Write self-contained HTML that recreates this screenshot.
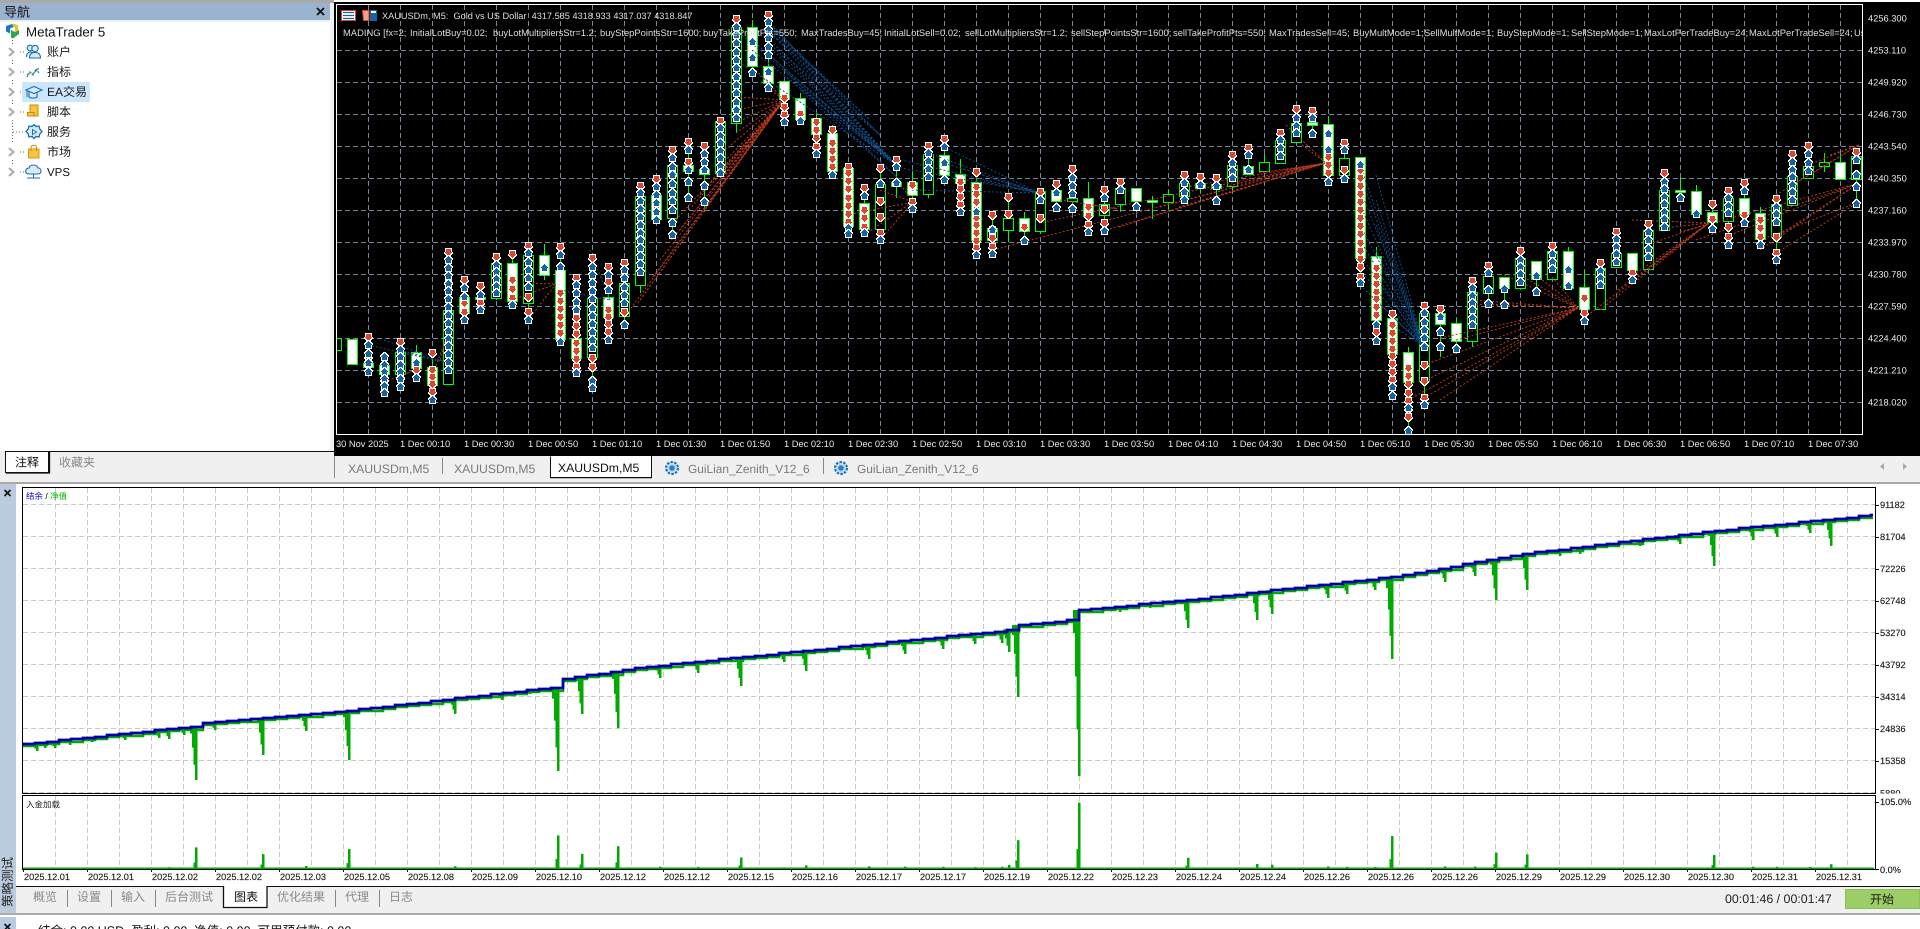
<!DOCTYPE html>
<html><head><meta charset="utf-8"><title>MetaTrader 5</title>
<style>
html,body{margin:0;padding:0;background:#fff;overflow:hidden;width:1920px;height:929px}
svg{position:absolute;left:0;top:0;display:block}
text{font-family:"Liberation Sans","Noto Sans CJK SC",sans-serif;white-space:pre;text-rendering:geometricPrecision}
.w{fill:#dcdcdc;font-size:9.2px}
.w2{fill:#dcdcdc;font-size:9.4px}
.ax{fill:#e8e8e8;font-size:9.3px}
.tr{fill:#1a1a1a;font-size:12px}
.tb{fill:#7a7a7a;font-size:12.2px}
.tb2{fill:#7a7a7a;font-size:11.9px}
.bt{fill:#8a8a8a;font-size:12px}
.da{fill:#1c1c1c;font-size:9.2px;stroke:#1c1c1c;stroke-width:.15px}
.ya{fill:#1c1c1c;font-size:9.2px;stroke:#1c1c1c;stroke-width:.15px}
</style></head><body>
<svg width="1920" height="929" viewBox="0 0 1920 929" xmlns="http://www.w3.org/2000/svg">
<defs>
<clipPath id="cc"><rect x="337" y="5" width="1525" height="429"/></clipPath>
<clipPath id="c5"><rect x="1860" y="780" width="60" height="13.5"/></clipPath>
<clipPath id="cb"><rect x="0" y="917" width="1920" height="12"/></clipPath>
</defs>
<rect width="1920" height="929" fill="#fff"/>
<!-- navigator -->
<rect x="0" y="0" width="334" height="3" fill="#a9a9a9"/>
<rect x="0" y="3" width="330" height="17" fill="#9ab3cf"/>
<rect x="330" y="3" width="4" height="480" fill="#f0f0f0"/>
<rect x="0" y="20" width="330" height="2" fill="#eef0f3"/>
<text x="4" y="16.500" font-size="13" fill="#111">导航</text>
<path d="M317 8l7 7M324 8l-7 7" stroke="#111" stroke-width="1.800" fill="none"/>
<!-- tree lines -->
<path d="M12.500 40V46M12.500 60V66M12.500 80V86M12.500 100V106M12.500 120V142M12.500 160V166" stroke="#666" stroke-dasharray="1 2" fill="none"/>
<path d="M20 52H24M20 72H24M20 92H24M20 112H24M13 132H24M20 152H24M20 172H24" stroke="#666" stroke-dasharray="1 2" fill="none"/>
<path d="M9 48l4.500 4-4.500 4M9 68l4.500 4-4.500 4M9 88l4.500 4-4.500 4M9 108l4.500 4-4.500 4M9 148l4.500 4-4.500 4M9 168l4.500 4-4.500 4" stroke="#aaa" stroke-width="2" fill="none"/>
<rect x="22" y="82" width="68" height="20" fill="#cce6fd"/>
<!-- MT logo -->
<g transform="translate(5 23)">
<path d="M1 3l6-2 4 2-6 2.500v5l-4-2z" fill="#1d77c9"/>
<path d="M8 0.500l5 1.800v5l-3 1.500v-4.500l-3-1.500z" fill="#f4c21a"/>
<path d="M6 7l4 2 4-2v4l-6 4.500-2-1z" fill="#2aa84a"/>
</g>
<!-- accounts -->
<g fill="#d8ebfa" stroke="#1b6eb3" stroke-width="1.100">
<circle cx="30" cy="48" r="2.800"/><path d="M26.500 57c0-4 2-5 4-5s3 .7 3 1.500"/>
<circle cx="35" cy="48.500" r="3.200"/><path d="M29.500 58c0-4 2.500-5.500 5.500-5.500s5.500 1.500 5.500 5.500z"/>
</g>
<!-- indicators -->
<path d="M27 77l3-5 3 3 3-6 3 4" stroke="#1b6eb3" stroke-width="1.200" fill="none" stroke-dasharray="2 .8"/>
<path d="M27 75l3-3 3 2 3-3 3-3" stroke="#2aa84a" stroke-width="1.200" fill="none" stroke-dasharray="2 1.500"/>
<!-- cap -->
<g fill="#d8ebfa" stroke="#1b6eb3" stroke-width="1.100"><path d="M29 92v5c2 1.500 6 1.500 8 0v-5"/><path d="M26 90l8-3.500 8 3.500-8 3.500z"/></g><path d="M27 91v6" stroke="#1b6eb3"/>
<!-- script -->
<path d="M30 105h8v11h-10.500v-3.500h2.500z" fill="#f6c343" stroke="#c98a04"/>
<path d="M27.500 116h6.500v-3.500h-6.500z" fill="#f6c343" stroke="#c98a04"/>
<!-- service gear -->
<path d="M34 124.500l2 2 3-.5 .8 3 2.200 2.500-2.200 2.500-.8 3-3-.5-2 2-2-2-3 .5-.8-3-2.200-2.500 2.200-2.500.8-3 3 .5z" fill="#d8ebfa" stroke="#1b6eb3" stroke-width="1.300"/>
<path d="M32.500 129.500l4 2.500-4 2.500z" fill="#fff" stroke="#1b6eb3"/>
<!-- market bag -->
<path d="M28.500 149h10.500v9h-10.500z" fill="#f6c343" stroke="#d59a0c"/><path d="M31 151v-3.500c0-3 5.500-3 5.500 0v3.500" stroke="#c98a04" fill="none"/>
<!-- cloud -->
<path d="M29 174c-5 0-4-6 0-6 1-4 8-4 9 0 4 0 4 6 0 6z" fill="#d8ebfa" stroke="#1b6eb3" stroke-width="1.100"/><path d="M33.500 174v4M27 178h13" stroke="#1b6eb3"/>
<text x="26" y="36.500" font-size="13.300" fill="#111">MetaTrader 5</text>
<text x="47" y="56" class="tr">账户</text><text x="47" y="76" class="tr">指标</text>
<text x="47" y="96" class="tr">EA交易</text><text x="47" y="116" class="tr">脚本</text>
<text x="47" y="136" class="tr">服务</text><text x="47" y="156" class="tr">市场</text>
<text x="47" y="176" font-size="11.500" fill="#111">VPS</text>
<!-- left tabs -->
<rect x="0" y="451" width="334" height="31" fill="#f0f0f0"/>
<path d="M49 451.500H334" stroke="#111"/>
<rect x="5.500" y="451.500" width="43" height="21" fill="#fff" stroke="#111"/>
<path d="M6 473h43.500V452" stroke="#111" stroke-width="1.300" fill="none"/>
<text x="15" y="466.500" font-size="12" fill="#111">注释</text>
<text x="59" y="466.500" font-size="12" fill="#888">收藏夹</text>
<!-- chart area -->
<rect x="334" y="2" width="1586" height="454" fill="#000"/>
<path d="M336.500 4.500H1862.500V434.500H336.500Z" fill="none" stroke="#fff"/>
<g id="grid" stroke="#76869f" stroke-dasharray="5 3" fill="none"></g>
<g id="chart" clip-path="url(#cc)"></g>
<g clip-path="url(#cc)">
<rect x="341.500" y="10.500" width="14" height="10" fill="#fff" stroke="#d8432b" stroke-width="1"/><path d="M343 12.500h11M343 15.500h11M343 18.500h11" stroke="#1464a5" stroke-width="1.300"/>
<path d="M362.500 10.500h6.500v10h-5.500z" fill="#f4a08e" stroke="#d8432b"/><path d="M370 13h7v8h-7z" fill="#1464a5"/><path d="M370.500 10.500h6v3h-6z" fill="#fff" stroke="#1464a5"/>
<text x="382" y="19" class="w">XAUUSDm, M5:  Gold vs US Dollar  4317.585 4318.933 4317.037 4318.847</text>
<text y="36" class="w2"><tspan x="343">MADING [fx=2; </tspan><tspan x="410">InitialLotBuy=0.02; </tspan><tspan x="493">buyLotMultipliersStr=1.2; </tspan><tspan x="600">buyStepPointsStr=1600; </tspan><tspan x="703">buyTakeProfitPts=550; </tspan><tspan x="801">MaxTradesBuy=45; </tspan><tspan x="884">InitialLotSell=0.02; </tspan><tspan x="965">sellLotMultipliersStr=1.2; </tspan><tspan x="1071">sellStepPointsStr=1600; </tspan><tspan x="1173">sellTakeProfitPts=550; </tspan><tspan x="1269">MaxTradesSell=45; </tspan><tspan x="1353">BuyMultMode=1; </tspan><tspan x="1424">SellMultMode=1; </tspan><tspan x="1497">BuyStepMode=1; </tspan><tspan x="1571">SellStepMode=1; </tspan><tspan x="1644">MaxLotPerTradeBuy=24; </tspan><tspan x="1749">MaxLotPerTradeSell=24; </tspan><tspan x="1854">Use</tspan></text>
</g>
<g class="ax">
<text x="1868" y="21.500" class="ax">4256.300</text><text x="1868" y="53.500" class="ax">4253.110</text><text x="1868" y="85.500" class="ax">4249.920</text><text x="1868" y="117.500" class="ax">4246.730</text><text x="1868" y="149.500" class="ax">4243.540</text><text x="1868" y="181.500" class="ax">4240.350</text><text x="1868" y="213.500" class="ax">4237.160</text><text x="1868" y="245.500" class="ax">4233.970</text><text x="1868" y="277.500" class="ax">4230.780</text><text x="1868" y="309.500" class="ax">4227.590</text><text x="1868" y="341.500" class="ax">4224.400</text><text x="1868" y="373.500" class="ax">4221.210</text><text x="1868" y="405.500" class="ax">4218.020</text>
<text x="336" y="447" class="ax">30 Nov 2025</text><text x="400" y="447" class="ax">1 Dec 00:10</text><text x="464" y="447" class="ax">1 Dec 00:30</text><text x="528" y="447" class="ax">1 Dec 00:50</text><text x="592" y="447" class="ax">1 Dec 01:10</text><text x="656" y="447" class="ax">1 Dec 01:30</text><text x="720" y="447" class="ax">1 Dec 01:50</text><text x="784" y="447" class="ax">1 Dec 02:10</text><text x="848" y="447" class="ax">1 Dec 02:30</text><text x="912" y="447" class="ax">1 Dec 02:50</text><text x="976" y="447" class="ax">1 Dec 03:10</text><text x="1040" y="447" class="ax">1 Dec 03:30</text><text x="1104" y="447" class="ax">1 Dec 03:50</text><text x="1168" y="447" class="ax">1 Dec 04:10</text><text x="1232" y="447" class="ax">1 Dec 04:30</text><text x="1296" y="447" class="ax">1 Dec 04:50</text><text x="1360" y="447" class="ax">1 Dec 05:10</text><text x="1424" y="447" class="ax">1 Dec 05:30</text><text x="1488" y="447" class="ax">1 Dec 05:50</text><text x="1552" y="447" class="ax">1 Dec 06:10</text><text x="1616" y="447" class="ax">1 Dec 06:30</text><text x="1680" y="447" class="ax">1 Dec 06:50</text><text x="1744" y="447" class="ax">1 Dec 07:10</text><text x="1808" y="447" class="ax">1 Dec 07:30</text>
</g>
<!-- chart tabs -->
<rect x="334" y="456" width="1586" height="26" fill="#f0f0f0"/>
<path d="M334.500 456V478M442.500 458V474M823.500 458V474" stroke="#8a8a8a"/>
<rect x="0" y="482" width="1920" height="2" fill="#aaa"/>
<path d="M550.500 477V456.500M651.500 456V477" stroke="#111"/><path d="M550 477.500H652" stroke="#111" stroke-width="1.500"/>
<rect x="551" y="456" width="100" height="21" fill="#fff"/>
<text x="348" y="473" class="tb">XAUUSDm,M5</text><text x="454" y="473" class="tb">XAUUSDm,M5</text>
<text x="558" y="472" font-size="12.200" fill="#111">XAUUSDm,M5</text>
<circle cx="672" cy="468" r="6" fill="#bcd9f2" stroke="#1b6eb3" stroke-width="2" stroke-dasharray="2.400 1.400"/><circle cx="672" cy="468" r="2.800" fill="#2f7fc4"/>
<text x="688" y="473" class="tb2">GuiLian_Zenith_V12_6</text>
<circle cx="841" cy="468" r="6" fill="#bcd9f2" stroke="#1b6eb3" stroke-width="2" stroke-dasharray="2.400 1.400"/><circle cx="841" cy="468" r="2.800" fill="#2f7fc4"/>
<text x="857" y="473" class="tb2">GuiLian_Zenith_V12_6</text>
<path d="M1884 463v7l-4-3.500zM1903 463v7l4-3.500z" fill="#aaa"/>
<!-- tester -->
<rect x="0" y="484" width="16" height="429" fill="#b9cbdc"/>
<path d="M4.500 490l6 6M10.500 490l-6 6" stroke="#111" stroke-width="1.600"/>
<text transform="translate(12 907) rotate(-90)" font-size="12.500" fill="#222">策略测试</text>
<g id="eq"></g>
<rect x="22.500" y="487.500" width="1853" height="306" fill="none" stroke="#000"/>
<rect x="22.500" y="795.500" width="1853" height="74" fill="none" stroke="#000"/>
<text x="26" y="499" font-size="8.500" fill="#0000c8">结余<tspan fill="#000"> / </tspan><tspan fill="#00b000">净值</tspan></text>
<text x="26" y="807.500" font-size="8.500" fill="#222">入金加载</text>
<g>
<text x="1880" y="508" class="ya">91182</text><text x="1880" y="540" class="ya">81704</text><text x="1880" y="572" class="ya">72226</text><text x="1880" y="604" class="ya">62748</text><text x="1880" y="636" class="ya">53270</text><text x="1880" y="668" class="ya">43792</text><text x="1880" y="700" class="ya">34314</text><text x="1880" y="732" class="ya">24836</text><text x="1880" y="764" class="ya">15358</text>
<g clip-path="url(#c5)"><text x="1880" y="796.500" class="ya">5880</text></g>
<text x="1880" y="805" class="ya">105.0%</text><text x="1880" y="873" class="ya">0.0%</text>
</g>
<g>
<text x="24" y="880" class="da">2025.12.01</text><text x="88" y="880" class="da">2025.12.01</text><text x="152" y="880" class="da">2025.12.02</text><text x="216" y="880" class="da">2025.12.02</text><text x="280" y="880" class="da">2025.12.03</text><text x="344" y="880" class="da">2025.12.05</text><text x="408" y="880" class="da">2025.12.08</text><text x="472" y="880" class="da">2025.12.09</text><text x="536" y="880" class="da">2025.12.10</text><text x="600" y="880" class="da">2025.12.12</text><text x="664" y="880" class="da">2025.12.12</text><text x="728" y="880" class="da">2025.12.15</text><text x="792" y="880" class="da">2025.12.16</text><text x="856" y="880" class="da">2025.12.17</text><text x="920" y="880" class="da">2025.12.17</text><text x="984" y="880" class="da">2025.12.19</text><text x="1048" y="880" class="da">2025.12.22</text><text x="1112" y="880" class="da">2025.12.23</text><text x="1176" y="880" class="da">2025.12.24</text><text x="1240" y="880" class="da">2025.12.24</text><text x="1304" y="880" class="da">2025.12.26</text><text x="1368" y="880" class="da">2025.12.26</text><text x="1432" y="880" class="da">2025.12.26</text><text x="1496" y="880" class="da">2025.12.29</text><text x="1560" y="880" class="da">2025.12.29</text><text x="1624" y="880" class="da">2025.12.30</text><text x="1688" y="880" class="da">2025.12.30</text><text x="1752" y="880" class="da">2025.12.31</text><text x="1816" y="880" class="da">2025.12.31</text>
</g>
<!-- bottom tabs -->
<rect x="16" y="886" width="1904" height="27" fill="#f0f0f0"/>
<rect x="0" y="913" width="1920" height="2" fill="#aaa"/>
<path d="M16 886.500H1920" stroke="#111"/>
<rect x="223.500" y="886" width="43" height="21.500" fill="#fff"/>
<path d="M223.500 886V907.500H267V886" stroke="#111" stroke-width="1.300" fill="none"/>
<path d="M67.500 890V907M111.500 890V907M155.500 890V907M335.500 890V907M379.500 890V907" stroke="#888"/>
<text x="33" y="901" class="bt">概览</text><text x="77" y="901" class="bt">设置</text><text x="121" y="901" class="bt">输入</text><text x="165" y="901" class="bt">后台测试</text>
<text x="234" y="901" font-size="12" fill="#111">图表</text>
<text x="277" y="901" class="bt">优化结果</text><text x="345" y="901" class="bt">代理</text><text x="389" y="901" class="bt">日志</text>
<text x="1725" y="903" font-size="12.400" fill="#222">00:01:46 / 00:01:47</text>
<rect x="1845.500" y="889.500" width="74" height="19" fill="#9ccd66" stroke="#8bbf58"/>
<text x="1870" y="903.500" font-size="12" fill="#1a1a1a">开始</text>
<!-- bottom bar -->
<rect x="0" y="917" width="16" height="12" fill="#b9cbdc"/>
<path d="M4.500 924l6 6M10.500 924l-6 6" stroke="#111" stroke-width="1.600"/>
<g clip-path="url(#cb)"><text x="38" y="935" font-size="12.500" fill="#111">结余: 0.00 USD  盈利: 0.00  净值: 0.00  可用预付款: 0.00</text></g>
</svg>
<script>
(function(){
var Y=function(p){return Math.round(10+p/3)};
var D=[
[985,1022,0],[988,1063,1],
[1060,1072,1,[[1005,1085]],[980,1040,1065]],
[1065,1093,1,[[1042,1150]],[1075,1110]],
[1027,1093,0,[[1020,1130]],[997,1060,1105]],
[1027,1075,1,[1060,1103],[1080],1005],
[1072,1125,1,[1170],[1030,[1080,1145]]],
[900,1123,0,[[750,1080]],[727,820,910]],
[860,908,1,[[835,860],930],[810,880,905]],
[862,866,1,[855,900],[827,878]],
[758,862,0,[[765,850]],[740],null,870],
[760,875,1,[885],[732,[810,865]]],
[735,878,0,[[730,830],930],[707,860,905]],
[734,793,1,[775],[],702,810],
[780,988,1,[735,770,997],[710,[850,970]]],
[985,1045,1,[[825,900],1090],[803,[925,1070]]],
[865,1043,0,[[770,1015],1112,1135],[745,1045,1070]],
[860,920,1,[795,840,990],[770,815,[900,965]]],
[820,918,0,[[780,880],945],[758,905]],
[558,825,0,[[550,785]],[527,600,680],null,848],
[555,628,1,[[530,630]],[507,600]],
[465,625,0,[443,[470,600],640,675],[420,495]],
[465,482,1,[420,480,515,565],[395,455]],
[478,493,1,[432,455,480,528,575],[408],null,605],
[333,490,0,[[355,490]],[332]],
[50,337,0,[[50,325]],[28,200,300],null,370],
[52,170,1,[95,145,190],[],30],
[167,218,1,[[35,135],187,235],[14]],
[212,265,1,[335],[[265,315]]],
[265,328,1,[333],[312],250],
[325,373,1,[432],[[335,410]],310],
[370,483,1,[495],[360,[400,470]],345],
[475,650,1,[655,672],[470,[490,635]]],
[580,658,1,[558,670],[533,[600,650]]],
[523,658,0,[522,690],[473,572,620,668],465],
[515,527,1,[470,518],[450],440,565],
[515,553,1,[598],[525,575],483],
[433,553,0,[[430,500]],[407],null,565],
[434,495,1,[410,460,510],[387]],
[493,520,1,[605],[[515,585]],447],
[515,690,1,[605,735],[485,[530,715]]],
[655,692,0,[660,733],[615,[660,710]]],
[623,658,0,[],[560,612],null,695],
[623,662,1,[693],[650],605],
[543,662,0,[570],[545,625],null,672],
[540,572,1,[548,595],[523]],
[565,575,0,[505,528,552,598],[478]],
[565,620,1,[665],[[590,645]],517],
[583,617,0,[565,662],[540,597,640]],
[535,583,0,[540],[517],null,605],
[535,575,1,[590],[],null,605],
[571,577,1,[],[],558,627],
[552,577,0,[],[],540,600],
[518,557,0,[[520,570]],[495]],
[520,535,1,[525],[500],null,550],
[523,535,1,[527,573],[503]],
[465,527,0,[[458,505]],[435],null,540],
[467,490,1,[435,480],[413]],
[457,485,0,[],[],433],
[390,460,0,[[390,437]],[368]],
[338,395,0,[[323,370]],[298]],
[337,347,1,[325,372],[302]],
[343,497,1,[372,420,515],[[440,490]],318],
[445,495,0,[420,507],[398,480]],
[442,745,1,[465,820],[[480,770],800]],
[737,928,1,[945,993],[[775,915],965],710],
[925,1032,1,[1130,1158],[913,[945,1110]]],
[1025,1115,1,[1195,1262],[[1075,1220]],1010],
[910,1115,0,[[910,1010],1185],[888,1065,1112,1163]],
[910,943,1,[920,965,1010],[897],null,1042],
[940,995,1,[1017],[],925],
[847,993,0,[[835,945]],[813],null,1012],
[798,850,0,[790,840,882],[767]],
[800,833,1,[838,885],[]],
[743,832,0,[[750,815]],[722]],
[752,805,1,[798,847],[]],
[722,805,0,[[732,778]],[707]],
[722,833,1,[780,828],[],712],
[830,895,1,[932],[865,910],780],
[773,895,0,[[783,825]],[760]],
[730,772,0,[[688,755]],[667]],
[730,780,1,[810],[790]],
[660,778,0,[[667,740]],[643],null,788],
[540,660,0,[[515,650]],[490]],
[540,547,1,[565],[],500],
[542,610,1,[612],[],525],
[605,635,1,[657],[582,628]],
[565,635,0,[[563,610],705],[542,650,680]],
[565,612,1,[543,638],[518,615]],
[608,685,1,[705],[[630,680]],590],
[583,683,0,[[590,635],750],[568,680,730]],
[498,585,0,[[457,570]],[433]],
[467,503,0,[433,458,482],[409]],
[455,467,0,[],[],430,485],
[455,505,1,[],[],433],
[437,507,0,[450,495,532,582],[425]]
];
function ex(a){var r=[];(a||[]).forEach(function(v){if(typeof v==='number')r.push(v);else{var n=Math.max(1,Math.round((v[1]-v[0])/24));for(var i=0;i<=n;i++)r.push(v[0]+(v[1]-v[0])*i/n)}});return r}
var g='';
for(var y=50;y<434;y+=32)g+='<path d="M337 '+(y+.5)+'H1862"/>';
for(var x=368;x<1862;x+=32)g+='<path d="M'+(x+.5)+' 5V434"/>';
document.getElementById('grid').innerHTML=g;
var tk='';
for(y=18;y<434;y+=32)tk+='<path d="M1862 '+(y+.5)+'H1867" stroke="#fff"/>';
for(x=336;x<1862;x+=64)tk+='<path d="M'+(x+.5)+' 434V438" stroke="#fff"/>';
var s='',ar='';
var RW=[[-5,3],[-4,5],[-3,7],[-2,9],[-1,9],[0,7],[1,7],[2,7],[3,7]];
var RC=[[-4,1],[-3,3],[-2,5],[-1,7],[0,5],[1,5],[2,5]];
function rows(x,y,R,flip){var d='';R.forEach(function(r){var yy=flip?y-r[0]-1:y+r[0],l=x-r[1]/2;d+='M'+l+' '+yy+'h'+r[1]+'v1h-'+r[1]+'z'});return d}
function up(x,y){return '<path d="'+rows(x,y,RW,0)+'" fill="#fff"/><path d="'+rows(x,y,RC,0)+'" fill="#1464a5"/>'}
function dn(x,y){return '<path d="'+rows(x,y,RW,1)+'" fill="#fff"/><path d="'+rows(x,y,RC,1)+'" fill="#e0452b"/>'}
D.forEach(function(d,k){
 var cx=Math.floor(336.5+16*k)+.5,b=ex(d[3]),r=ex(d[4]),all=b.concat(r,[d[0],d[1]]);
 if(d[5]!=null)all.push(d[5]);if(d[6]!=null)all.push(d[6]);
 var t=Math.min.apply(null,all),u=Math.max.apply(null,all);
 s+='<path d="M'+cx+' '+Y(t)+'V'+Y(u)+'" stroke="#0f0"/>';
 var tp=Y(d[0])+.5,h=Math.max(2,Math.round((d[1]-d[0])/3));
 s+='<rect x="'+(cx-5)+'" y="'+tp+'" width="10" height="'+h+'" fill="'+(d[2]?'#fff':'#000')+'" stroke="#0f0"/>';
 r.forEach(function(p){ar+=dn(cx,Y(p))});
 b.forEach(function(p){ar+=up(cx,Y(p))});
});
var ln='';
function fan(col,tx,ty,src){src.forEach(function(p){ln+='<path d="M'+p[0]+' '+p[1]+'L'+tx+' '+ty+'" stroke="'+col+'"/>'})}
var RD='#b9391c',BL='#0c4f8c';
fan(RD,784,100,[[626,315],[638,303],[653,277],[669,243],[673,223],[689,210],[704,210],[719,177],[719,167],[736,133],[736,123],[736,110],[736,97],[753,67],[768,88],[640,300],[660,260],[680,230],[700,195],[725,150]]);
fan(BL,896,165,[[736,30],[752,40],[768,20],[768,30],[768,38],[768,46],[768,54],[784,75],[736,60],[752,50],[768,25],[768,42]]);
fan(BL,880,135,[[768,22],[768,30],[784,55]]);
fan(BL,870,120,[[768,24],[776,34]]);
fan(BL,900,180,[[784,70],[800,90]]);
fan(BL,1039,193,[[928,153],[944,147],[944,163],[889,157],[896,167],[976,180],[912,190],[960,168]]);
fan(BL,1424,347,[[1360,165],[1360,175],[1360,190],[1360,205],[1360,225],[1360,240],[1360,255],[1360,270],[1360,285],[1376,175],[1376,200],[1376,225],[1376,250],[1376,275],[1376,300],[1392,325],[1408,330]]);
fan(RD,1578,308,[[1424,398],[1424,381],[1424,365],[1440,338],[1456,340],[1472,304],[1488,304],[1504,275],[1520,275],[1536,275],[1552,277],[1440,400],[1408,400],[1472,300]]);
fan(RD,1709,223,[[1653,243],[1649,267],[1633,275],[1618,290],[1600,310],[1584,318],[1632,220],[1664,228]]);
fan(RD,1859,145,[[1776,195],[1792,185],[1808,165],[1830,155]]);
fan(RD,1859,183,[[1776,237],[1760,250],[1730,235],[1696,240],[1680,232]]);
fan(RD,1859,202,[[1776,253],[1760,240]]);
fan(RD,1326,163,[[1179,207],[1160,207],[1119,227],[1106,230],[1039,223],[993,250],[1233,185],[1259,173],[1186,187],[1210,190],[1286,170],[1302,145],[1286,125]]);
fan(RD,913,202,[[864,235],[880,240],[846,215],[896,178],[880,190]]);
fan(RD,449,330,[[432,377],[440,360]]);
fan(RD,556,284,[[528,283],[528,320],[512,300]]);
fan(RD,416,370,[[384,382],[400,376]]);
fan(BL,448,363,[[368,345],[400,350],[384,340]]);
fan(BL,610,300,[[560,290],[590,250]]);
fan(RD,1118,209,[[1090,205],[1060,200]]);
document.getElementById('chart').innerHTML=s+'<g stroke-dasharray="2 2" fill="none">'+ln+'</g><g shape-rendering="crispEdges">'+ar+'</g>'+tk;
/* equity */
var A=[[23,744],[196,726],[200,723],[343,711],[558,687],[561,679],[618,671],[625,669],[1000,631],[1017,628],[1018,625],[1072,620],[1079,610],[1187,600],[1257,592],[1300,587],[1390,577],[1530,553],[1714,531],[1873,515]];
function bal(x){for(var i=1;i<A.length;i++){if(x<=A[i][0]){var a=A[i-1],b=A[i];return a[1]+(b[1]-a[1])*(x-a[0])/(b[0]-a[0])}}return 515}
var e='<g stroke="#c8c8c8" stroke-dasharray="5 3" fill="none">';
for(y=504;y<793;y+=32)e+='<path d="M23 '+(y+.5)+'H1875"/>';
for(x=55;x<1875;x+=32)e+='<path d="M'+(x+.5)+' 488V793M'+(x+.5)+' 796V869"/>';
e+='</g>';
var dips=[[37,751],[45,748],[55,748],[70,745],[92,742],[125,740],[159,738],[169,739],[184,735],[196,780],[215,730],[263,755],[306,731],[349,760],[389,708],[422,705],[455,714],[502,700],[530,694],[558,771],[582,714],[618,728],[660,678],[698,673],[741,686],[784,662],[806,671],[869,659],[905,654],[943,649],[975,644],[1002,643],[1009,652],[1018,697],[1079,776],[1120,612],[1150,608],[1188,628],[1257,620],[1272,614],[1328,598],[1347,594],[1375,590],[1392,659],[1445,582],[1475,576],[1496,600],[1527,590],[1560,556],[1580,554],[1640,546],[1680,544],[1714,566],[1753,540],[1777,537],[1810,533],[1831,546]];
var gs='',bars='';
dips.forEach(function(d){
 var x=d[0],b=bal(x),dp=d[1]-b,
 s1=b+dp*.72,s2=b+dp*.4,s3=b+dp*.14;
 gs+='<rect x="'+(x-1)+'" y="'+b+'" width="2.500" height="'+dp+'"/>';
 gs+='<rect x="'+(x-2.500)+'" y="'+b+'" width="1.500" height="'+(s1-b)+'"/>';
 gs+='<rect x="'+(x-4)+'" y="'+b+'" width="1.500" height="'+(s2-b)+'"/>';
 gs+='<rect x="'+(x-6)+'" y="'+b+'" width="2" height="'+(s3-b)+'"/>';
 var h=dp>28?dp*.4:dp*.18;
 bars+='<rect x="'+(x-1)+'" y="'+(869-h)+'" width="2.500" height="'+h+'"/>';
 bars+='<rect x="'+(x-2.500)+'" y="'+(869-h*.3)+'" width="1.500" height="'+(h*.3)+'"/>';
});
var pb='',pg='',st=12,xx,yy,py=null;
for(xx=23;xx<1873;xx+=st){yy=Math.round(bal(xx));pb+=(py==null?'M'+xx+' '+yy:'V'+yy)+'H'+Math.min(1873,xx+st);py=yy}
py=null;
for(xx=23;xx<1873;xx+=st){yy=Math.round(bal(xx));pg+=(py==null?'M'+xx+' '+(yy+2):'V'+(yy+2+(((xx/st)|0)%5==0?1:0)))+'H'+Math.min(1873,xx+st);py=yy}
e+='<path d="'+pg+'" fill="none" stroke="#00aa00" stroke-width="2.500"/>';
e+='<g fill="#00aa00">'+gs+bars+'<rect x="23" y="867.500" width="1851" height="2"/></g>';
e+='<path d="'+pb+'" fill="none" stroke="#0000aa" stroke-width="2.700"/>';
var t2='';
for(y=505;y<793;y+=32)t2+='<path d="M1875 '+(y+.5)+'H1879" stroke="#111"/>';
t2+='<path d="M1875 802.500H1879M1875 869.500H1879" stroke="#111"/>';
for(x=23;x<1875;x+=64)t2+='<path d="M'+(x+.5)+' 869V872" stroke="#111"/>';
document.getElementById('eq').innerHTML=e+t2;
})();
</script>
</body></html>
